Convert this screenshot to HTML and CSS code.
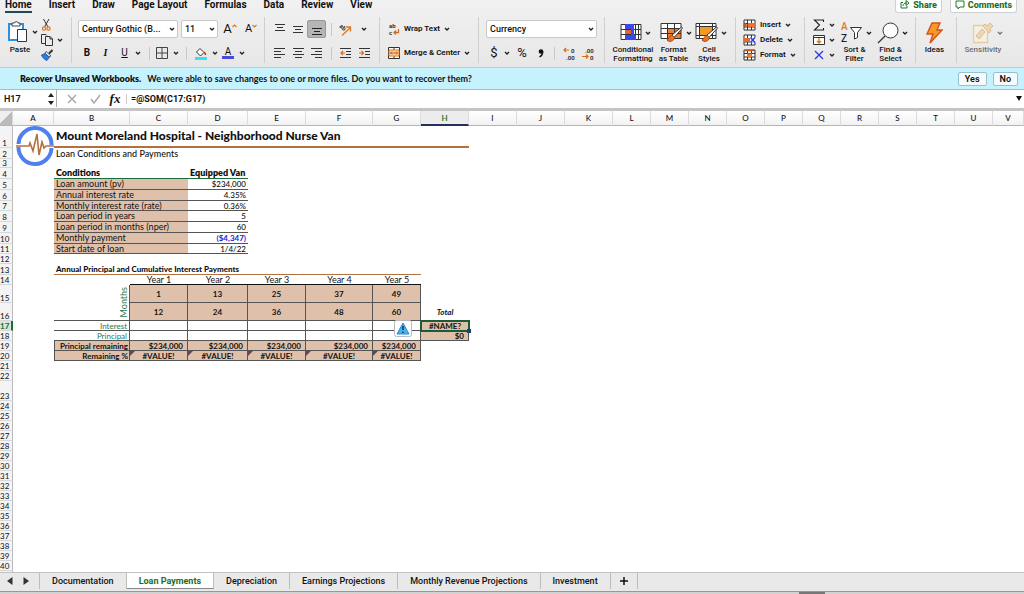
FILE: index.html
```html
<!DOCTYPE html>
<html lang="en">
<head>
<meta charset="utf-8">
<title>Mount Moreland Hospital - Loan Payments</title>
<link rel="stylesheet" href="styles.css">
</head>
<body>
<svg class="defs" width="0" height="0" aria-hidden="true">
  <defs>
    <symbol id="chev" viewBox="0 0 6 6"><path d="M1 2l2 2 2-2" fill="none" stroke="#222" stroke-width="1.4"/></symbol>
    <symbol id="brush" viewBox="0 0 17 17"><path d="M15.500 1L6 9l2 2.500L16.500 2z" fill="#fff" stroke="#333" stroke-width="1"/><path d="M6.500 9.500c-3-.5-3 3-5.500 4.500 2 2.500 7 1.500 7.500-2.500z" fill="#e8742a" stroke="#a8420f" stroke-width="1"/></symbol>
    <symbol id="cells" viewBox="0 0 13 12"><path d="M1 1h11v10H1zM1 4.500h11M1 8h11M4.500 1v10M8.500 1v10" fill="#fff" stroke="#333" stroke-width="1"/></symbol>
  </defs>
</svg>
<div class="app">
  <header class="ribbon">
    <div class="top">
      <nav class="menu" aria-label="Ribbon">
        <a class="on" href="#home">Home</a><a href="#insert">Insert</a><a href="#draw">Draw</a><a href="#layout">Page Layout</a><a href="#formulas">Formulas</a><a href="#data">Data</a><a href="#review">Review</a><a href="#view">View</a>
      </nav>
      <div class="share">
        <button><svg width="10" height="9" viewBox="0 0 10 9"><path d="M3 2.500H1V8h6V6M3 6c0-2.500 1.500-3 4-3M6 .5L9 3 6 5.500z" fill="none" stroke="#1c7a2c"/></svg>Share</button>
        <button><svg width="10" height="10" viewBox="0 0 10 10"><path d="M1 1h8v6H5L3 9V7H1z" fill="none" stroke="#1c7a2c"/></svg>Comments</button>
      </div>
    </div>
    <div class="tools">
      <section class="group clip">
        <div class="big">
          <button class="pic" aria-label="Paste options"><svg width="22" height="23" viewBox="0 0 22 23"><path d="M2 4h14v16H2z" fill="#fff" stroke="#2c8fe0" stroke-width="2"/><path d="M5 6V3h2.500a1.800 1.800 0 0 1 3.500 0H13v3z" fill="#fff" stroke="#444"/><path d="M10.500 9.500h9v12h-9z" fill="#fff" stroke="#333"/></svg><svg class="chev"><use href="#chev"/></svg></button>
          <span class="cap">Paste</span>
        </div>
        <div class="stack">
          <button aria-label="Cut"><svg width="11" height="12" viewBox="0 0 11 12"><path d="M2.500 0l4.500 8M8 0L3.500 8" fill="none" stroke="#333"/><circle cx="3" cy="9.500" r="1.600" fill="none" stroke="#dc7a1e" stroke-width="1.200"/><circle cx="7.500" cy="9.500" r="1.600" fill="none" stroke="#dc7a1e" stroke-width="1.200"/></svg></button>
          <button aria-label="Copy"><svg width="12" height="12" viewBox="0 0 12 12"><path d="M4 9.500H.5V.5H5l1 1M4.500 2.500H9l2.500 2.500v6.500h-7zM9 2.500V5h2.500" fill="none" stroke="#333"/></svg><svg class="chev"><use href="#chev"/></svg></button>
          <button aria-label="Format painter"><svg width="12" height="12" viewBox="0 0 12 12"><path d="M11.500 1L8 4.500" stroke="#333" stroke-width="2"/><path d="M5 2.500l5 4.500-2 1-4-4z" fill="#fff" stroke="#333" stroke-width=".8"/><path d="M4 4.500L.5 6c1 3 3 4.500 5.500 5.500L8.500 8z" fill="#2b7de0" stroke="#1c56a8" stroke-width=".8"/></svg></button>
        </div>
      </section>
      <section class="group font">
        <div class="row gap">
          <span class="pick face"><select aria-label="Font"><option>Century Gothic (B...</option></select><svg class="chev"><use href="#chev"/></svg></span>
          <span class="pick size"><select aria-label="Font size"><option>11</option></select><svg class="chev"><use href="#chev"/></svg></span>
          <button class="slot" aria-label="Increase font size"><span class="grow">A</span><svg width="5" height="12" viewBox="0 0 5 12"><path d="M.5 4l2-2 2 2" fill="none" stroke="#dc7a1e" stroke-width="1.200"/></svg></button>
          <button class="slot" aria-label="Decrease font size"><span class="shrink">A</span><svg width="5" height="12" viewBox="0 0 5 12"><path d="M.5 2l2 2 2-2" fill="none" stroke="#dc7a1e" stroke-width="1.200"/></svg></button>
        </div>
        <div class="row style">
          <button><b>B</b></button><button class="it">I</button><button class="un">U</button><button aria-label="Underline options"><svg class="chev"><use href="#chev"/></svg></button><i class="bar"></i>
          <button aria-label="Borders"><svg width="12" height="12" viewBox="0 0 12 12"><path d="M.5.5h11v11H.5zM6 .5v11M.5 6h11" fill="none" stroke="#444"/></svg></button><button aria-label="Border options"><svg class="chev"><use href="#chev"/></svg></button><i class="bar"></i>
          <button aria-label="Fill color"><svg width="12" height="13" viewBox="0 0 12 13"><path d="M5 1.500L9 5.500 5.500 9 1.500 5z" fill="#fff" stroke="#333"/><path d="M9 5c1.500 1 1.500 2 1.500 3" fill="none" stroke="#b23018" stroke-width="1.500"/><path d="M0 10h12v3H0z" fill="#2ee6f0"/></svg></button><button aria-label="Fill options"><svg class="chev"><use href="#chev"/></svg></button>
          <button class="tint">A</button><button aria-label="Font color options"><svg class="chev"><use href="#chev"/></svg></button>
        </div>
      </section>
      <section class="group align">
        <div class="row lines">
          <button aria-label="Top"><svg width="10" height="11" viewBox="0 0 10 11"><path d="M0 .5h10M2 3.500h6M0 6.500h10" stroke="#333"/></svg></button>
          <button aria-label="Middle"><svg width="10" height="11" viewBox="0 0 10 11"><path d="M0 2.500h10M2 5.500h6M0 8.500h10" stroke="#333"/></svg></button>
          <button class="pressed" aria-label="Bottom"><svg width="10" height="11" viewBox="0 0 10 11"><path d="M0 4.500h10M2 7.500h6M0 10.500h10" stroke="#222"/></svg></button><i class="bar"></i>
          <button aria-label="Orientation"><svg width="13" height="13" viewBox="0 0 13 13"><text x="0" y="6" class="mini" transform="rotate(40 3 5)">ab</text><path d="M3 12.500l8.500-8M7 4h4.500v4.500" fill="none" stroke="#dc7a1e" stroke-width="1.300"/></svg></button>
          <button aria-label="Orientation options"><svg class="chev"><use href="#chev"/></svg></button>
        </div>
        <div class="row lines">
          <button aria-label="Left"><svg width="11" height="11" viewBox="0 0 11 11"><path d="M0 .5h11M0 3.500h7M0 6.500h11M0 9.500h7" stroke="#333"/></svg></button>
          <button aria-label="Center"><svg width="11" height="11" viewBox="0 0 11 11"><path d="M0 .5h11M2 3.500h7M0 6.500h11M2 9.500h7" stroke="#333"/></svg></button>
          <button aria-label="Right"><svg width="11" height="11" viewBox="0 0 11 11"><path d="M0 .5h11M4 3.500h7M0 6.500h11M4 9.500h7" stroke="#333"/></svg></button><i class="bar"></i>
          <button aria-label="Decrease indent"><svg width="11" height="11" viewBox="0 0 11 11"><path d="M0 .5h11M6 3.500h5M6 6.500h5M0 9.500h11" stroke="#333"/><path d="M5 5H1M3 3L1 5l2 2" fill="none" stroke="#dc6a1e" stroke-width="1.200"/></svg></button>
          <button aria-label="Increase indent"><svg width="11" height="11" viewBox="0 0 11 11"><path d="M0 .5h11M6 3.500h5M6 6.500h5M0 9.500h11" stroke="#333"/><path d="M0 5h4M2.500 3l2 2-2 2" fill="none" stroke="#dc6a1e" stroke-width="1.200"/></svg></button>
        </div>
      </section>
      <section class="group wrap">
        <div class="row"><button class="lab"><svg width="12" height="13" viewBox="0 0 12 13"><text x="1" y="5" class="mini">ab</text><text x="1" y="12" class="mini">c</text><path d="M10.500 6v3.500H6M8 7.500l-2 2 2 2" fill="none" stroke="#dc6a1e" stroke-width="1.300"/></svg>Wrap Text<svg class="chev"><use href="#chev"/></svg></button></div>
        <div class="row"><button class="lab"><svg width="12" height="12" viewBox="0 0 12 12"><path d="M.5.5h11v11H.5z" fill="#fff" stroke="#333"/><path d="M6 1v10" stroke="#333"/><path d="M1 3h10v6H1z" fill="#fbd9ae" stroke="#dc7a1e"/><path d="M2.500 6h7M4 4.500L2.500 6 4 7.500M8 4.500L9.500 6 8 7.500" fill="none" stroke="#c05010"/></svg>Merge &amp; Center<svg class="chev"><use href="#chev"/></svg></button></div>
      </section>
      <section class="group number">
        <div class="row"><span class="pick wide"><select aria-label="Number format"><option>Currency</option></select><svg class="chev"><use href="#chev"/></svg></span></div>
        <div class="row num">
          <button class="sym">$</button><button aria-label="Currency options"><svg class="chev"><use href="#chev"/></svg></button><button class="sym">%</button><button aria-label="Comma style"><svg width="6" height="9" viewBox="0 0 6 9"><circle cx="3" cy="2.500" r="2.300" fill="#111"/><path d="M4.700 2.500Q5 6 1.500 8" fill="none" stroke="#111" stroke-width="1.400"/></svg></button><i class="bar"></i>
          <button aria-label="Increase decimal"><svg width="13" height="13" viewBox="0 0 13 13"><path d="M6 3H1M3 1L1 3l2 2" fill="none" stroke="#dc6a1e" stroke-width="1.200"/><text x="8" y="6" class="mini">0</text><text x="3" y="13" class="mini">.00</text></svg></button>
          <button aria-label="Decrease decimal"><svg width="13" height="13" viewBox="0 0 13 13"><path d="M0 9.500h6M4 7.500l2 2-2 2" fill="none" stroke="#dc6a1e" stroke-width="1.200"/><text x="3" y="6" class="mini">.00</text><text x="8" y="13" class="mini">0</text></svg></button>
        </div>
      </section>
      <section class="group looks">
        <div class="big">
          <button class="pic" aria-label="Conditional formatting options"><svg width="22" height="19" viewBox="0 0 22 19"><path d="M1 1.500h20v15H1zM1 6.500h20M1 11.500h20M5.500 1.500v15M15.500 1.500v15M18.500 1.500v15" fill="#fff" stroke="#333"/><path d="M5 1h9v5H5zM5 12h11v5H5z" fill="#3a48f0"/><path d="M5 7h6v4H5z" fill="#e8642a"/><path d="M11 6h3v6h-3z" fill="#3a48f0"/></svg><svg class="chev"><use href="#chev"/></svg></button>
          <span class="cap">Conditional<br>Formatting</span>
        </div>
        <div class="big">
          <button class="pic" aria-label="Table format options"><svg width="23" height="21" viewBox="0 0 23 21"><path d="M1 1.500h20v15H1z" fill="#fff"/><path d="M7 6.500h14v10H7z" fill="#ee7f30"/><path d="M1 1.500h20v15H1zM1 6.500h20M1 11.500h20M7.500 1.500v15M14.500 1.500v15" fill="none" stroke="#333"/><use href="#brush" x="6" y="4" width="17" height="17"/></svg><svg class="chev"><use href="#chev"/></svg></button>
          <span class="cap">Format<br>as Table</span>
        </div>
        <div class="big">
          <button class="pic" aria-label="Cell style options"><svg width="23" height="21" viewBox="0 0 23 21"><path d="M1 1.500h20v15H1z" fill="#fff" stroke="#333"/><path d="M1 4.500h20M4.500 1.500v15M17.500 1.500v15M1 13.500h20" stroke="#333"/><path d="M5 5h12v8H5z" fill="#f09a28"/><use href="#brush" x="6" y="4" width="17" height="17"/></svg><svg class="chev"><use href="#chev"/></svg></button>
          <span class="cap">Cell<br>Styles</span>
        </div>
      </section>
      <section class="group cellops">
        <button class="lab"><svg width="13" height="12" viewBox="0 0 13 12"><use href="#cells"/><path d="M5 4h7v4H5z" fill="#ee7030"/><path d="M5 6H1M3 4L1 6l2 2" fill="none" stroke="#d85010" stroke-width="1.300"/></svg>Insert<svg class="chev"><use href="#chev"/></svg></button>
        <button class="lab"><svg width="13" height="12" viewBox="0 0 13 12"><use href="#cells"/><path d="M1 4h6v4H1z" fill="#e86a30"/><path d="M7 3.500h6v5H7z" fill="#fff"/><path d="M7.500 3.500l4.500 5M12 3.500l-4.500 5" stroke="#2838e8" stroke-width="1.500"/></svg>Delete<svg class="chev"><use href="#chev"/></svg></button>
        <button class="lab"><svg width="13" height="12" viewBox="0 0 13 12"><use href="#cells"/><path d="M4 4.500h5V8H4z" fill="#ee8030"/><path d="M2 1.500h9" stroke="#d85010" stroke-width="1.500"/></svg>Format<svg class="chev"><use href="#chev"/></svg></button>
      </section>
      <section class="group edit">
        <div class="stack">
          <button aria-label="AutoSum"><svg width="12" height="12" viewBox="0 0 12 12"><path d="M10.500 3V1h-9L6.500 6l-5 5h9V9" fill="none" stroke="#222" stroke-width="1.100"/></svg><svg class="chev"><use href="#chev"/></svg></button>
          <button aria-label="Fill"><svg width="12" height="12" viewBox="0 0 12 12"><path d="M.5 1.500h11v9H.5zM.5 3.500h11" fill="#fff" stroke="#333"/><path d="M6 4v5M4 7l2 2 2-2" fill="none" stroke="#dc7a1e" stroke-width="1.300"/></svg><svg class="chev"><use href="#chev"/></svg></button>
          <button aria-label="Clear"><svg width="12" height="12" viewBox="0 0 12 12"><path d="M2 2l8 8M10 2l-8 8" stroke="#2838e8" stroke-width="1.300"/></svg><svg class="chev"><use href="#chev"/></svg></button>
        </div>
        <div class="big">
          <button class="pic" aria-label="Sort options"><svg width="22" height="22" viewBox="0 0 22 22"><text x="0" y="8" class="az a">A</text><text x="0" y="20" class="az">Z</text><path d="M9.500 5.500h11l-4 5v5l-3 1.500v-6.500z" fill="#fff" stroke="#333"/></svg><svg class="chev"><use href="#chev"/></svg></button>
          <span class="cap">Sort &amp;<br>Filter</span>
        </div>
        <div class="big">
          <button class="pic" aria-label="Find options"><svg width="22" height="22" viewBox="0 0 22 22"><circle cx="13.500" cy="8.500" r="7.500" fill="#fff" stroke="#333"/><path d="M8 14l-7 7" stroke="#333" stroke-width="1.200"/></svg><svg class="chev"><use href="#chev"/></svg></button>
          <span class="cap">Find &amp;<br>Select</span>
        </div>
      </section>
      <section class="group ideas">
        <div class="big"><button class="pic" aria-label="Show ideas"><svg width="17" height="22" viewBox="0 0 17 22"><path d="M6 1h8l-3 7h5L4 21l3-9H1z" fill="#f49a28" stroke="#d8501c" stroke-width="1.400"/></svg></button><span class="cap">Ideas</span></div>
      </section>
      <section class="group sens">
        <div class="big"><button class="pic" disabled aria-label="Sensitivity options"><svg width="22" height="22" viewBox="0 0 22 22"><path d="M1.500 3.500h14v17h-14z" fill="#fbf1de" stroke="#e4b878" stroke-width="1.300"/><path d="M4 14l6-7 3 3-6 7zM11 4l2-2 2 2 3-3 3 3-3 3 1 2-2 2z" fill="#f0c88a" stroke="#cf9e5c"/></svg><svg class="chev"><use href="#chev"/></svg></button><span class="cap">Sensitivity</span></div>
      </section>
    </div>
  </header>

  <div class="notice">
    <p><strong>Recover Unsaved Workbooks.</strong><span>We were able to save changes to one or more files. Do you want to recover them?</span></p>
    <button>Yes</button><button>No</button>
  </div>

  <div class="formula">
    <input class="name" aria-label="Name box" value="H17">
    <svg width="6" height="14" viewBox="0 0 6 14"><path d="M3 1l3 4H0zM3 13L0 9h6z" fill="#222"/></svg>
    <button aria-label="Cancel"><svg width="10" height="10" viewBox="0 0 10 10"><path d="M1 1l8 8M9 1L1 9" stroke="#aaa" stroke-width="1.500"/></svg></button>
    <button aria-label="Enter"><svg width="11" height="10" viewBox="0 0 11 10"><path d="M1 5l3 4 6-8" fill="none" stroke="#aaa" stroke-width="1.500"/></svg></button>
    <button class="fx">fx</button>
    <input class="expr" aria-label="Formula" value="=@SOM(C17:G17)">
    <svg class="more" width="6" height="5" viewBox="0 0 6 5"><path d="M0 0h6L3 5z" fill="#111"/></svg>
  </div>

  <main class="sheet">
    <table>
      <colgroup><col class="rh"><col class="ca"><col class="cb"><col class="cc"><col class="cd"><col class="cc"><col class="cf"><col class="cg"><col class="cg"><col class="cg"><col class="cg"><col class="cg"><col class="cn"><col class="cn"><col class="cn"><col class="cn"><col class="cn"><col class="cn"><col class="cn"><col class="cn"><col class="cn"><col class="cn"><col></colgroup>
      <thead><tr><th class="corner"></th><th>A</th><th>B</th><th>C</th><th>D</th><th>E</th><th>F</th><th>G</th><th class="hit">H</th><th>I</th><th>J</th><th>K</th><th>L</th><th>M</th><th>N</th><th>O</th><th>P</th><th>Q</th><th>R</th><th>S</th><th>T</th><th>U</th><th>V</th></tr></thead>
      <tbody>
        <tr class="h22"><th>1</th><td class="anchor"><svg class="logo" width="42" height="40" viewBox="0 0 42 40"><path d="M4.500 18A16.500 16.500 0 0 1 37.500 19M37.500 22A16.500 16.500 0 0 1 4.500 21" fill="none" stroke="#5080ee" stroke-width="4"/><path d="M2 20h13l1-3 3 8 4-17 2 21 3-13 2 6 2-2h8" fill="none" stroke="#b5703f" stroke-width="1.600"/></svg></td><td class="title" colspan="7">Mount Moreland Hospital - Neighborhood Nurse Van</td><td colspan="14"></td></tr>
        <tr class="h11"><th>2</th><td></td><td class="sub" colspan="21">Loan Conditions and Payments</td></tr>
        <tr class="h9"><th>3</th><td colspan="22"></td></tr>
        <tr class="h11 heads"><th>4</th><td></td><td class="b" colspan="2">Conditions</td><td class="b r">Equipped Van</td><td colspan="18"></td></tr>
        <tr class="h11 cond"><th>5</th><td></td><td colspan="2">Loan amount (pv)</td><td>$234,000</td><td colspan="18"></td></tr>
        <tr class="h11 cond"><th>6</th><td></td><td colspan="2">Annual interest rate</td><td>4.35%</td><td colspan="18"></td></tr>
        <tr class="h10 cond"><th>7</th><td></td><td colspan="2">Monthly interest rate (rate)</td><td>0.36%</td><td colspan="18"></td></tr>
        <tr class="h11 cond"><th>8</th><td></td><td colspan="2">Loan period in years</td><td>5</td><td colspan="18"></td></tr>
        <tr class="h11 cond"><th>9</th><td></td><td colspan="2">Loan period in months (nper)</td><td>60</td><td colspan="18"></td></tr>
        <tr class="h11 cond"><th>10</th><td></td><td colspan="2">Monthly payment</td><td class="neg">($4,347)</td><td colspan="18"></td></tr>
        <tr class="h10 cond"><th>11</th><td></td><td colspan="2">Start date of loan</td><td>1/4/22</td><td colspan="18"></td></tr>
        <tr class="h10"><th>12</th><td colspan="22"></td></tr>
        <tr class="h11"><th>13</th><td></td><td class="b rule" colspan="6">Annual Principal and Cumulative Interest Payments</td><td colspan="15"></td></tr>
        <tr class="h10 years"><th>14</th><td></td><td></td><td class="c">Year 1</td><td class="c">Year 2</td><td class="c">Year 3</td><td class="c">Year 4</td><td class="c">Year 5</td><td colspan="15"></td></tr>
        <tr class="h18 tan"><th>15</th><td></td><td class="months" rowspan="2"><span>Months</span></td><td class="c">1</td><td class="c">13</td><td class="c">25</td><td class="c">37</td><td class="c">49</td><td colspan="15"></td></tr>
        <tr class="h18 tan"><th>16</th><td></td><td class="c">12</td><td class="c">24</td><td class="c">36</td><td class="c">48</td><td class="c">60</td><td class="total">Total</td><td colspan="14"></td></tr>
        <tr class="h10 plain"><th class="hit">17</th><td></td><td class="green">Interest</td><td></td><td></td><td></td><td></td><td class="anchor"><svg class="warn" width="18" height="17" viewBox="0 0 18 17"><rect x=".5" y=".5" width="17" height="16" rx="2" fill="#fff" stroke="#bbb"/><path d="M9 3l6 11H3z" fill="#48b4f0" stroke="#2a88d0"/><path d="M9 6v4M9 11.500v1.500" stroke="#183060" stroke-width="1.500"/></svg></td><td class="active">#NAME?<i></i></td><td colspan="14"></td></tr>
        <tr class="h10 plain"><th>18</th><td></td><td class="green">Principal</td><td></td><td></td><td></td><td></td><td></td><td class="sum">$0</td><td colspan="14"></td></tr>
        <tr class="h10 tan fin"><th>19</th><td></td><td class="c">Principal remaining</td><td class="c">$234,000</td><td class="c">$234,000</td><td class="c">$234,000</td><td class="c">$234,000</td><td class="c">$234,000</td><td colspan="15"></td></tr>
        <tr class="h10 tan err"><th>20</th><td></td><td class="c">Remaining %</td><td class="c">#VALUE!</td><td class="c">#VALUE!</td><td class="c">#VALUE!</td><td class="c">#VALUE!</td><td class="c">#VALUE!</td><td colspan="15"></td></tr>
        <tr class="h10"><th>21</th><td colspan="22"></td></tr>
        <tr class="h10"><th>22</th><td colspan="22"></td></tr>
        <tr class="h20"><th>23</th><td colspan="22"></td></tr>
        <tr class="h10"><th>24</th><td colspan="22"></td></tr>
        <tr class="h10"><th>25</th><td colspan="22"></td></tr>
        <tr class="h10"><th>26</th><td colspan="22"></td></tr>
        <tr class="h10"><th>27</th><td colspan="22"></td></tr>
        <tr class="h10"><th>28</th><td colspan="22"></td></tr>
        <tr class="h10"><th>29</th><td colspan="22"></td></tr>
        <tr class="h10"><th>30</th><td colspan="22"></td></tr>
        <tr class="h10"><th>31</th><td colspan="22"></td></tr>
        <tr class="h10"><th>32</th><td colspan="22"></td></tr>
        <tr class="h10"><th>33</th><td colspan="22"></td></tr>
        <tr class="h10"><th>34</th><td colspan="22"></td></tr>
        <tr class="h10"><th>35</th><td colspan="22"></td></tr>
        <tr class="h10"><th>36</th><td colspan="22"></td></tr>
        <tr class="h10"><th>37</th><td colspan="22"></td></tr>
        <tr class="h10"><th>38</th><td colspan="22"></td></tr>
        <tr class="h10"><th>39</th><td colspan="22"></td></tr>
        <tr class="h10"><th>40</th><td colspan="22"></td></tr>
      </tbody>
    </table>
  </main>

  <nav class="tabs" aria-label="Sheets">
    <span class="arrows"><button aria-label="Previous sheet"><svg width="6" height="8" viewBox="0 0 6 8"><path d="M5.500 0v8L0 4z" fill="#333"/></svg></button><button aria-label="Next sheet"><svg width="6" height="8" viewBox="0 0 6 8"><path d="M.5 0v8L6 4z" fill="#333"/></svg></button></span>
    <a href="#doc">Documentation</a><a class="on" href="#loan">Loan Payments</a><a href="#dep">Depreciation</a><a href="#earn">Earnings Projections</a><a href="#rev">Monthly Revenue Projections</a><a href="#inv">Investment</a><button class="add" aria-label="Add sheet"><svg width="8" height="8" viewBox="0 0 8 8"><path d="M4 0v8M0 4h8" stroke="#111" stroke-width="1.500"/></svg></button>
  </nav>
  <footer class="status"><span></span></footer>
</div>
</body>
</html>
```
FILE: styles.css
```css
* { box-sizing: border-box; }
body { margin: 0; background: #fff; color: #111; font-family: Roboto, "Liberation Sans", sans-serif; font-size: 9px; line-height: 10px; }
button, input, select { margin: 0; padding: 0; border: 0; background: none; font: inherit; color: inherit; }
a { color: inherit; text-decoration: none; }
svg { display: block; flex: none; }
.defs { position: absolute; }
.app { display: flex; flex-direction: column; min-width: 1024px; min-height: 100vh; overflow: hidden; }

/* ribbon */
.ribbon { height: 68px; background: linear-gradient(#f1f1f1, #e7e7e7); border-bottom: 1px solid #c6c6c6; }
.top { display: flex; justify-content: space-between; height: 14px; }
.menu { display: flex; gap: 17px; padding-left: 5px; font-size: 10px; font-weight: 700; line-height: 10px; }
.menu a { height: 13px; }
.menu .on { border-bottom: 2px solid #1d4a55; }
.share { display: flex; gap: 8px; padding-right: 7px; }
.share button { display: flex; align-items: center; gap: 3px; height: 13px; padding: 0 4px 3px; background: #fff; border: 1px solid #d0d0d0; border-top: 0; border-radius: 0 0 3px 3px; color: #17701f; font-size: 9px; font-weight: 800; }
.tools { display: grid; grid-template-columns: 72px 193px 115px 99px 126px 131px 69px 111px 41px 1fr; height: 53px; padding: 3px 0 6px; }
.group { display: flex; flex-direction: column; justify-content: space-between; border-right: 1px solid #cfcfcf; min-width: 0; }
.group:last-child { border-right: 0; }
.chev { width: 6px; height: 6px; }
.row { display: flex; align-items: center; height: 20px; margin-top: 2px; }
.row button { display: flex; align-items: center; justify-content: center; }
.bar { width: 1px; height: 13px; background: #c8c8c8; justify-self: center; }
.pick { display: grid; align-items: center; height: 18px; background: #fff; border: 1px solid #c9c9c9; border-radius: 2px; }
.pick select { grid-area: 1 / 1; width: 100%; padding-left: 3px; appearance: none; font-size: 9px; font-weight: 500; }
.pick .chev { grid-area: 1 / 1; justify-self: end; margin-right: 2px; pointer-events: none; }
.big { display: flex; flex-direction: column; align-items: center; text-align: center; }
.pic { display: flex; align-items: center; gap: 3px; height: 25px; padding-left: 8px; }
.cap { font-size: 8px; font-weight: 500; line-height: 9px; white-space: nowrap; }
.stack { display: flex; flex-direction: column; justify-content: space-around; }
.stack button { display: flex; align-items: center; gap: 4px; height: 14px; }
.lab { display: flex; align-items: center; gap: 4px; font-size: 8px; font-weight: 600; white-space: nowrap; }
.mini { font: 600 6px Roboto, sans-serif; fill: #222; }

.clip { flex-direction: row; justify-content: flex-start; gap: 5px; }
.clip .big { padding-top: 2px; width: 36px; padding-left: 4px; }
.clip .cap { padding-top: 1px; }
.clip .pic { padding-left: 4px; }
.font { padding-left: 6px; }
.gap { gap: 3px; }
.face { width: 100px; }
.size { width: 37px; }
.slot { width: 18px; }
.grow { font-size: 13px; }
.shrink { font-size: 11px; }
.style { display: grid; grid-template-columns: 18px 19px 19px 8px 14px 12px 15px 7px 22px 5px 22px 5px; font-size: 10px; }
.it { font-family: "Liberation Serif", serif; font-style: italic; font-weight: 700; }
.un { text-decoration: underline; }
.style .tint { justify-self: center; width: 12px; height: 12px; border-bottom: 3px solid #4a4ae0; line-height: 9px; }
.lines { display: grid; grid-template-columns: 19px 18px 19px 10px 19px 18px; padding-left: 5px; }
.pressed { height: 18px; background: #b5b5b5; border: 1px solid #999; border-radius: 2px; }
.wrap { padding-left: 8px; }
.number { padding-left: 7px; }
.wide { width: 111px; }
.num { display: grid; grid-template-columns: 14px 12px 18px 20px 7px 22px 16px; padding-left: 1px; }
.sym { font-size: 13px; }
.looks { flex-direction: row; justify-content: flex-start; padding-left: 7px; }
.looks .big:nth-child(1) { width: 42px; }
.looks .big:nth-child(2) { width: 39px; }
.looks .big:nth-child(3) { width: 32px; }
.looks .pic { padding-left: 4px; }
.looks .big, .edit .big, .ideas .big, .sens .big { padding-top: 3px; }
.cellops { padding-left: 7px; justify-content: space-around; }
.edit { flex-direction: row; justify-content: flex-start; gap: 3px; padding-left: 8px; }
.edit .big { width: 33px; }
.edit .pic { padding-left: 4px; }
.ideas { padding-right: 3px; }
.az { font: 500 10px Roboto, sans-serif; fill: #222; }
.az.a { fill: #dc7a1e; }
.ideas .pic { padding: 0; }
.sens .big { align-self: flex-start; width: 52px; opacity: .6; }

/* recovery notice */
.notice { display: flex; align-items: center; gap: 6px; height: 22px; padding: 0 6px 0 20px; background: #c6f2fd; border-bottom: 1px solid #9fc0ca; font-weight: 700; }
.notice p { flex: 1; display: flex; gap: 6px; margin: 0; font-family: Lato, sans-serif; }
.notice strong { font-weight: 800; }
.notice button { height: 14px; min-width: 24px; padding: 0 6px; background: #f6fcfe; border: 1px solid #9dbfc9; border-radius: 2px; font-weight: 600; }

/* formula bar */
.formula { display: flex; align-items: center; height: 21px; padding-bottom: 1px; border-bottom: 3px solid #c4c4c4; background: #fff; }
.formula .name { width: 48px; padding-left: 4px; font-weight: 600; }
.formula > svg + button { margin-left: 2px; border-left: 1px solid #aaa; width: 30px; }
.formula button { display: flex; align-items: center; justify-content: center; height: 17px; width: 18px; }
.formula .fx { width: 22px; font: italic 700 13px/14px "Liberation Serif", serif; }
.formula .expr { flex: 1; padding-left: 4px; border-left: 1px solid #ccc; font-size: 9px; font-weight: 700; }
.formula .more { margin-right: 2px; }

/* worksheet */
.sheet { flex: 1; overflow: hidden; background: linear-gradient(90deg, #f4f4f4 12px, #bbb 12px 13px, #fff 13px); }
table { table-layout: fixed; width: 100%; border-spacing: 0; font-family: Lato, sans-serif; font-size: 8px; line-height: 8px; }
td, th { padding: 0; font-weight: 400; white-space: nowrap; }
.rh { width: 13px; } .ca { width: 41px; } .cb { width: 76px; } .cc { width: 58px; } .cd { width: 60px; }
.cf { width: 67px; } .cg { width: 48px; } .cn { width: 38px; }
thead th { height: 15px; background: linear-gradient(#fff, #f2f2f2); border-right: 1px solid #dcdcdc; border-bottom: 1px solid #b5b5b5; font-weight: 500; }
thead .corner { background: linear-gradient(135deg, #eee 50%, #bbb 50%); }
thead .hit { background: #ececec; border-bottom: 2px solid #26305c; color: #3b7a2c; font-weight: 700; }
tbody th { vertical-align: bottom; padding-right: 3px; border-right: 1px solid #bbb; border-bottom: 1px solid #d8d8d8; background: #f4f4f4; font-size: 8px; }
tbody th.hit { background: #d6e8d8; border-right: 2px solid #1e6b3a; color: #1e6b3a; font-weight: 700; }
.h9 > * { height: 9px; } .h10 > * { height: 10px; } .h11 > * { height: 11px; }
.h18 > * { height: 18px; } .h20 > * { height: 20px; } .h22 > * { height: 22px; }
.anchor { position: relative; }
.logo { position: absolute; left: 1px; top: 0; }
.title { padding-left: 2px; border-bottom: 2px solid #b5703f; font-size: 12px; font-weight: 900; line-height: 14px; }
.sub { padding-left: 2px; font-size: 9px; font-weight: 500; }
.b { padding-left: 2px; font-weight: 900; }
.r { padding-right: 3px; text-align: right; }
.c { text-align: center; }
.heads .b { border-bottom: 1px solid #1e6b3a; font-size: 9px; font-weight: 800; }
.cond td:nth-child(3), .cond td:nth-child(4) { border-bottom: 1px solid #555; padding: 0 2px; }
.cond td:nth-child(3) { background: #dfc1ab; font-size: 9px; }
.cond td:nth-child(4) { text-align: right; font-weight: 500; }
.cond td.neg { color: #1c1cd8; font-weight: 700; }
.rule { border-bottom: 1px solid #b5703f; }
.years .c { border-bottom: 1px solid #111; font-size: 9px; }
.tan .c { background: #dfc1ab; border-right: 1px solid #555; border-bottom: 1px solid #555; font-weight: 700; }
.months { color: #2c7a50; border-right: 1px solid #555; border-bottom: 1px solid #555; }
.months span { display: block; margin-left: auto; width: 11px; writing-mode: vertical-rl; transform: rotate(180deg); line-height: 11px; text-align: center; font-size: 9px; }
.total { text-align: center; font-weight: 700; font-style: italic; }
.plain td:nth-child(n+3):nth-child(-n+8) { border-right: 1px solid #555; border-bottom: 1px solid #555; }
.green { color: #2c7a50; text-align: right; padding-right: 2px; }
.warn { position: absolute; left: 21px; top: -1px; }
.active { position: relative; background: #dfc1ab; outline: 2px solid #1a5c38; outline-offset: -1px; text-align: center; font-weight: 700; }
.active i { position: absolute; right: -2px; bottom: -2px; width: 4px; height: 4px; background: #223c78; }
.sum { background: #dfc1ab; border-right: 1px solid #555; border-bottom: 1px solid #555; text-align: right; padding-right: 4px; font-weight: 700; }
.fin .c { text-align: right; padding-right: 4px; }
.fin .c:nth-child(3), .err .c:nth-child(3) { text-align: right; padding-right: 1px; border-left: 1px solid #555; }
.err .c:nth-child(n+4) { background: linear-gradient(135deg, #5b4a5b 3px, #dfc1ab 4px); }

/* sheet tabs */
.tabs { display: flex; height: 19px; background: #e9e9e9; border-top: 1px solid #c2c2c2; font-weight: 500; line-height: 16px; }
.tabs > * { height: 16px; border-right: 1px solid #bdbdbd; }
.tabs a { padding: 0 12px; }
.tabs .on { background: #fff; color: #17701f; font-weight: 700; border-bottom: 1px solid #888; }
.arrows { display: flex; gap: 10px; width: 40px; padding-left: 7px; }
.arrows button { display: flex; align-items: center; }
.add { width: 27px; display: flex; align-items: center; justify-content: center; }
.status { height: 3px; background: #d2d2d2; border-top: 1px solid #999; }
.status span { display: block; width: 26px; height: 2px; margin-left: 78%; background: #777; }
```
